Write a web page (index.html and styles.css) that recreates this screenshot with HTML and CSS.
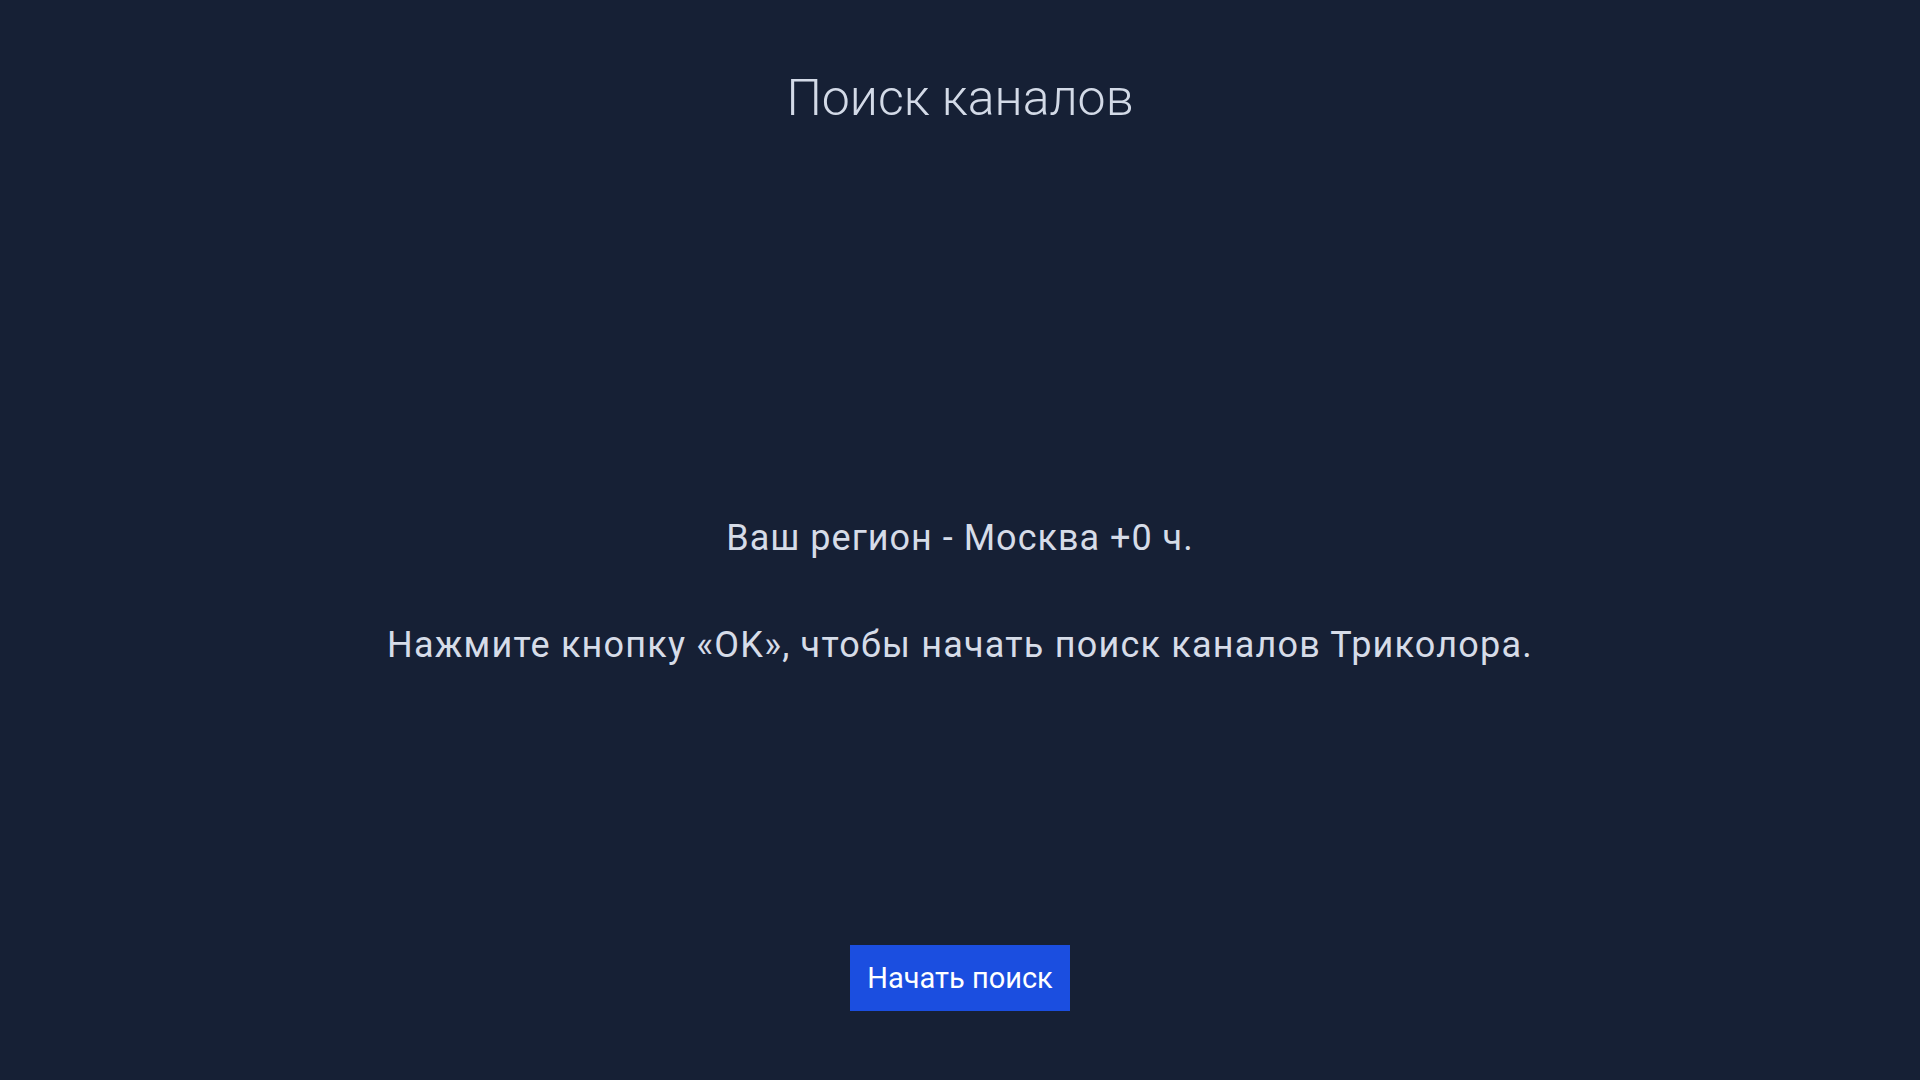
FILE: index.html
```html
<!DOCTYPE html>
<html lang="ru">
<head>
<meta charset="utf-8">
<title>Поиск каналов</title>
<link rel="stylesheet" href="styles.css">
</head>
<body>
<main class="screen">
  <h1 class="title">Поиск каналов</h1>
  <section class="message">
    <p class="line region">Ваш регион - Москва +0 ч.</p>
    <p class="line hint">Нажмите кнопку «OK», чтобы начать поиск каналов Триколора.</p>
  </section>
  <button class="start-btn" type="button">Начать поиск</button>
</main>
</body>
</html>
```
FILE: styles.css
```css
html, body {
  margin: 0;
  padding: 0;
  width: 1920px;
  height: 1080px;
  overflow: hidden;
  background: #162035;
}
.screen {
  display: flex;
  flex-direction: column;
  align-items: center;
  height: 1080px;
  font-family: Roboto, "Noto Sans", sans-serif;
  color: #d6dce8;
}
.title {
  margin: 68px 0 0 0;
  font-size: 50px;
  line-height: 60px;
  font-weight: 300;
  color: #d3dae7;
}
.message {
  margin-top: 390px;
  display: flex;
  flex-direction: column;
  align-items: center;
  gap: 67px;
}
.line {
  margin: 0;
  font-size: 36px;
  line-height: 40px;
  font-weight: 400;
  letter-spacing: 1px;
}
.hint {
  letter-spacing: 1.2px;
}
.start-btn {
  margin-top: 280px;
  width: 220px;
  height: 66px;
  border: none;
  background: #1b4ee0;
  color: #ffffff;
  font-family: Roboto, "Noto Sans", sans-serif;
  font-size: 29px;
  padding: 0;
}
```
